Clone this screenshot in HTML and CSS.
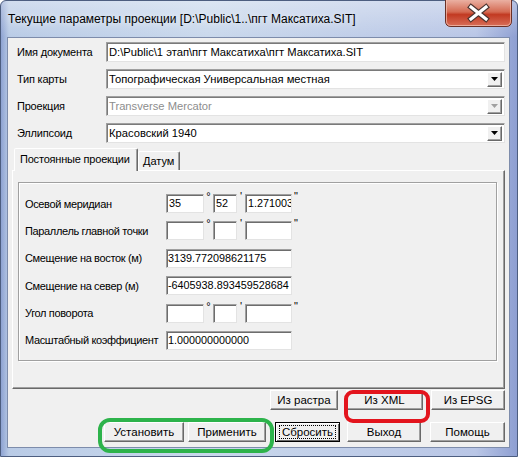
FILE: index.html
```html
<!DOCTYPE html>
<html>
<head>
<meta charset="utf-8">
<link rel="stylesheet" href="styles.css">
</head>
<body>
<div class="window">
  <div class="titlebar">
    <span class="title">Текущие параметры проекции [D:\Public\1..\пгт Максатиха.SIT]</span>
    <div class="close">
      <svg width="67" height="27" viewBox="0 0 67 27">
        <defs>
          <linearGradient id="cg" x1="0" y1="0" x2="0" y2="1">
            <stop offset="0" stop-color="#eab0a2"/>
            <stop offset="0.45" stop-color="#d46a52"/>
            <stop offset="0.55" stop-color="#c23a22"/>
            <stop offset="1" stop-color="#d9705a"/>
          </linearGradient>
        </defs>
        <path d="M0.5 0 V21 Q0.5 26.5 6 26.5 H61 Q66.5 26.5 66.5 21 V0" fill="url(#cg)" stroke="#6a3026" stroke-width="1"/>
        <path d="M1.5 0 V21 Q1.5 25.5 6 25.5 H61 Q65.5 25.5 65.5 21 V0" fill="none" stroke="#f3c4b6" stroke-opacity="0.7" stroke-width="1"/>
        <g stroke-linecap="square">
          <path d="M26 7 L41 19 M41 7 L26 19" stroke="#4a3430" stroke-width="5.5"/>
          <path d="M26 7 L41 19 M41 7 L26 19" stroke="#ffffff" stroke-width="3.2"/>
        </g>
      </svg>
    </div>
  </div>
  <div class="client">
    <div class="form">
      <span class="lbl">Имя документа</span>
      <div class="edit">D:\Public\1 этап\пгт Максатиха\пгт Максатиха.SIT</div>
      <span class="lbl">Тип карты</span>
      <div class="edit combo"><span class="val">Топографическая Универсальная местная</span><span class="drop"><svg width="7" height="4" viewBox="0 0 7 4"><path d="M0 0H7L3.5 4Z" fill="#000"/></svg></span></div>
      <span class="lbl">Проекция</span>
      <div class="edit combo disabled"><span class="val">Transverse Mercator</span><span class="drop"><svg width="7" height="4" viewBox="0 0 7 4"><path d="M0 0H7L3.5 4Z" fill="#a0a0a0"/></svg></span></div>
      <span class="lbl">Эллипсоид</span>
      <div class="edit combo"><span class="val">Красовский 1940</span><span class="drop"><svg width="7" height="4" viewBox="0 0 7 4"><path d="M0 0H7L3.5 4Z" fill="#000"/></svg></span></div>
    </div>

    <div class="tabctl">
      <div class="tabstrip">
        <div class="tab active">Постоянные проекции</div>
        <div class="tab">Датум</div>
      </div>
      <div class="page">
        <div class="panel">
          <span class="plbl">Осевой меридиан</span>
          <div class="dms">
            <div class="pedit w1">35</div><span class="mk">°</span>
            <div class="pedit w2">52</div><span class="mk">'</span>
            <div class="pedit w3">1.271003</div><span class="mk">"</span>
          </div>
          <span class="plbl">Параллель главной точки</span>
          <div class="dms">
            <div class="pedit w1"></div><span class="mk">°</span>
            <div class="pedit w2"></div><span class="mk">'</span>
            <div class="pedit w3"></div><span class="mk">"</span>
          </div>
          <span class="plbl">Смещение на восток (м)</span>
          <div class="pedit wide">3139.772098621175</div>
          <span class="plbl">Смещение на север (м)</span>
          <div class="pedit wide">-6405938.893459528684</div>
          <span class="plbl">Угол поворота</span>
          <div class="dms">
            <div class="pedit w1"></div><span class="mk">°</span>
            <div class="pedit w2"></div><span class="mk">'</span>
            <div class="pedit w3"></div><span class="mk">"</span>
          </div>
          <span class="plbl">Масштабный коэффициент</span>
          <div class="pedit wide">1.000000000000</div>
        </div>
      </div>
    </div>

    <div class="btnrow row1">
      <div class="btn b-raster">Из растра</div>
      <div class="btn b-xml">Из XML</div>
      <div class="btn b-epsg">Из EPSG</div>
    </div>
    <div class="btnrow row2">
      <div class="btn b-set">Установить</div>
      <div class="btn b-apply">Применить</div>
      <div class="btn b-reset default"><span class="focus">Сбросить</span></div>
      <div class="btn b-exit">Выход</div>
      <div class="btn b-help">Помощь</div>
    </div>
  </div>
  <div class="mark mark-green"></div>
  <div class="mark mark-red"></div>
</div>
</body>
</html>
```

FILE: styles.css
```css
html, body {
  margin: 0;
  padding: 0;
}
body {
  width: 518px;
  height: 457px;
  overflow: hidden;
  background: #ffffff;
  font-family: "Liberation Sans", Arial, sans-serif;
}
.window {
  position: relative;
  width: 518px;
  height: 457px;
  box-sizing: border-box;
  border-radius: 6px 6px 0 0;
  border: 1px solid #4d5e80;
  background:
    linear-gradient(180deg, rgba(255,255,255,0.35) 0, rgba(255,255,255,0) 36px),
    linear-gradient(90deg, #8ea3d2 0, #b9cbe6 8px, #c9d8ec 40%, #bfcde8 70%, #b9c6e6 92%, #8e9fd2 100%);
  display: flex;
  flex-direction: column;
}
.titlebar {
  height: 36px;
  display: flex;
  align-items: flex-start;
}
.title {
  padding: 11px 0 0 7px;
  font-size: 12px;
  color: #000;
  white-space: nowrap;
  text-shadow: 0 0 6px rgba(255,255,255,0.9);
}
.close {
  margin-left: auto;
  margin-right: 5px;
  margin-top: -1px;
  height: 27px;
}
.close svg { display: block; }

.client {
  margin: 0 7px 0 6px;
  height: 411px;
  box-sizing: border-box;
  border: 1px solid #7d8cab;
  background: #f0f0f0;
  padding: 4px 4px 0 4px;
  font-size: 11px;
  color: #000;
}

/* top form */
.form {
  display: grid;
  grid-template-columns: 89px 399px;
  grid-auto-rows: 20px;
  row-gap: 7px;
  margin-left: 5px;
  align-items: center;
}
.lbl {
  font-size: 11px;
  letter-spacing: -0.2px;
}
.edit {
  height: 20px;
  box-sizing: border-box;
  background: #fff;
  border: 1px solid;
  border-color: #a0a0a0 #e3e3e3 #e3e3e3 #a0a0a0;
  box-shadow: inset 1px 1px 0 #7a7a7a;
  font-size: 11.2px;
  line-height: 18px;
  padding-left: 2px;
  white-space: nowrap;
  overflow: hidden;
}
.combo {
  display: flex;
  align-items: center;
  padding-right: 2px;
}
.combo .val { flex: 1; }
.disabled .val { color: #8d8d8d; }
.drop {
  width: 15px;
  height: 15px;
  box-sizing: border-box;
  display: flex;
  align-items: center;
  justify-content: center;
  background: #f0f0f0;
  border: 1px solid;
  border-color: #fff #696969 #696969 #fff;
  box-shadow: inset -1px -1px 0 #a0a0a0;
}
.drop svg { display: block; }

/* tab control */
.tabctl {
  margin-top: 6px;
  width: 493px;
  height: 240px;
  display: flex;
  flex-direction: column;
}
.tabstrip {
  height: 22px;
  display: flex;
  align-items: flex-end;
  padding-left: 2px;
  position: relative;
  z-index: 1;
  margin-bottom: -1px;
}
.tab {
  box-sizing: border-box;
  height: 19px;
  padding: 0 4px;
  line-height: 18px;
  font-size: 11px;
  white-space: nowrap;
  background: #f0f0f0;
  border: 1px solid;
  border-bottom: none;
  border-color: #fff #696969 transparent #fff;
  box-shadow: inset -1px 0 0 #a0a0a0;
  border-radius: 2px 2px 0 0;
}
.tab.active {
  height: 23px;
  width: 124px;
  padding-left: 5px;
  line-height: 20px;
  letter-spacing: -0.2px;
}
.tab:not(.active) {
  width: 42px;
  margin-bottom: 1px;
}
.page {
  flex: 1;
  box-sizing: border-box;
  border: 1px solid;
  border-color: #fff #696969 #696969 #fff;
  box-shadow: inset -1px -1px 0 #a0a0a0;
  padding: 11px 0 0 5px;
}
.panel {
  width: 479px;
  height: 179px;
  box-sizing: border-box;
  border: 1px solid #a0a0a0;
  box-shadow: inset 1px 1px 0 #fff, 1px 1px 0 #fff;
  padding: 11px 0 0 6px;
  display: grid;
  grid-template-columns: 141px 140px;
  grid-auto-rows: 19px;
  row-gap: 8.4px;
  align-items: center;
}
.plbl {
  font-size: 11px;
  letter-spacing: -0.35px;
  white-space: nowrap;
}
.pedit {
  height: 19px;
  box-sizing: border-box;
  background: #fff;
  border: 1px solid;
  border-color: #a0a0a0 #e3e3e3 #e3e3e3 #a0a0a0;
  box-shadow: inset 1px 1px 0 #6d6d6d;
  font-size: 10.8px;
  line-height: 17px;
  padding-left: 2px;
  white-space: nowrap;
  overflow: hidden;
}
.pedit.wide { width: 126px; padding-left: 1px; }
.dms {
  display: flex;
  align-items: flex-start;
  height: 19px;
}
.pedit.w1 { width: 38px; }
.pedit.w2 { width: 24px; }
.pedit.w3 { width: 47px; }
.mk {
  font-size: 11px;
  line-height: 10px;
  margin-top: -3px;
  text-align: center;
  color: #000;
}
.dms .mk:nth-of-type(1) { width: 9px; }
.dms .mk:nth-of-type(2) { width: 8px; }
.dms .mk:nth-of-type(3) { width: 8px; }

/* buttons */
.btnrow {
  display: flex;
  justify-content: flex-end;
  height: 20px;
}
.row1 { margin-top: 1px; }
.row2 { margin-top: 12px; }
.btn {
  box-sizing: border-box;
  height: 20px;
  background: #f0f0f0;
  border: 1px solid;
  border-color: #fff #696969 #696969 #fff;
  box-shadow: inset -1px -1px 0 #a0a0a0;
  font-size: 11.5px;
  line-height: 18px;
  text-align: center;
  white-space: nowrap;
}
.b-raster { width: 68px; margin-right: 8px; }
.b-xml { width: 77px; margin-right: 8px; }
.b-epsg { width: 74px; }
.b-set { width: 80px; margin-right: 4px; }
.b-apply { width: 78px; margin-right: 9px; }
.b-reset { width: 65px; margin-right: 7px; }
.b-exit { width: 74px; margin-right: 9px; }
.b-help { width: 75px; }
.btn.default {
  border: 1px solid #000;
  box-shadow: inset 1px 1px 0 #fff, inset -1px -1px 0 #696969;
  padding: 2px 3px;
  line-height: 14px;
}
.focus {
  display: block;
  border: 1px dotted #000;
  line-height: 12px;
}

/* annotation marks */
.mark {
  position: absolute;
  box-sizing: border-box;
  pointer-events: none;
}
.mark-green {
  left: 97px;
  top: 417px;
  width: 176px;
  height: 35px;
  border: 4px solid #2db34b;
  border-radius: 12px;
}
.mark-red {
  left: 343px;
  top: 389px;
  width: 86px;
  height: 33px;
  border: 4px solid #e3141d;
  border-radius: 9px;
}
```
